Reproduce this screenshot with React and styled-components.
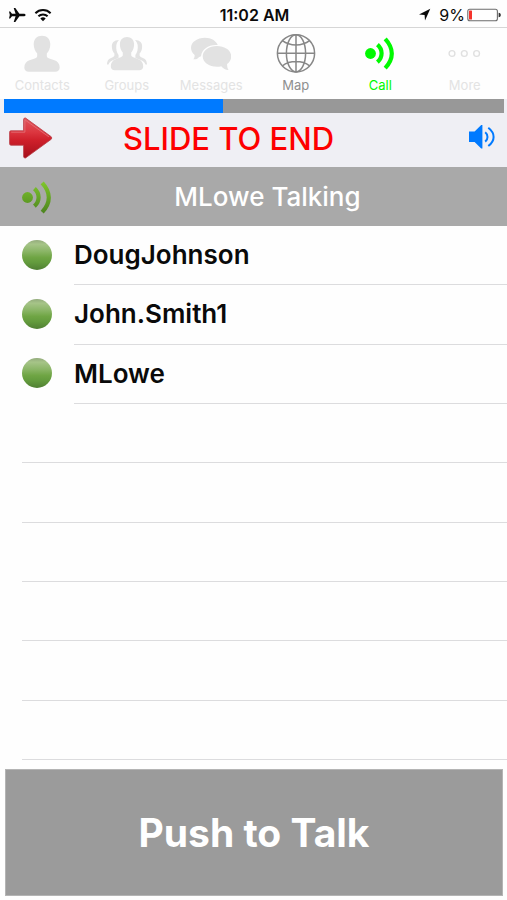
import React, { useState } from 'react'
import styled, { createGlobalStyle } from 'styled-components'

const GlobalStyle = createGlobalStyle`
  * {
    box-sizing: border-box;
  }

  body {
    margin: 0;
    background: #fefefe;
    color: #0a0a0a;
    font-family: Inter, 'Liberation Sans', sans-serif;
  }

  button {
    margin: 0;
    padding: 0;
    border: 0;
    background: none;
    color: inherit;
    font-family: inherit;
    cursor: pointer;
  }

  svg {
    display: block;
  }
`

const Screen = styled.div`
  display: flex;
  flex-direction: column;
  min-height: 100vh;
`

const StatusBar = styled.header`
  display: grid;
  grid-template-columns: 1fr auto 1fr;
  align-items: center;
  height: 28px;
  padding: 2px 6px 0 8px;
  border-bottom: 1px solid #d6d6d6;
  font-size: 16px;
  line-height: 20px;
`

const StatusGroup = styled.div`
  display: flex;
  align-items: center;
  justify-content: ${({ $end }) => ($end ? 'flex-end' : 'flex-start')};
  gap: ${({ $end }) => ($end ? '2px' : '8px')};
`

const Time = styled.time`
  font-weight: 600;
`

const Percent = styled.span`
  margin-left: 6px;
`

const Tabs = styled.nav`
  display: grid;
  grid-template-columns: repeat(6, 1fr);
  height: 71px;
`

const Tab = styled.button`
  display: flex;
  flex-direction: column;
  align-items: center;
  justify-content: flex-start;
  gap: 4px;
  padding-top: 5px;
  color: ${({ $color }) => $color};
  font-size: 13px;
  line-height: 16px;
`

const Track = styled.div`
  height: 14px;
  padding: 0 3px 0 4px;
  background: #efeff4;
`

const TrackInner = styled.div`
  height: 100%;
  background: #989898;
`

const TrackFill = styled.div`
  height: 100%;
  background: #007aff;
`

const EndBar = styled.section`
  display: flex;
  height: 54px;
  padding-bottom: 2px;
  background: #efeff4;
`

const Slider = styled.div`
  position: relative;
  display: flex;
  flex: 1;
  align-items: center;
  justify-content: center;
`

const SliderLabel = styled.label`
  color: #fe0000;
  font-size: 31px;
  font-weight: 500;
  line-height: 40px;
`

const Thumb = styled.div`
  position: absolute;
  top: 4px;
  left: 8px;
`

const Range = styled.input`
  position: absolute;
  inset: 0;
  width: 100%;
  height: 100%;
  margin: 0;
  opacity: 0;
  cursor: pointer;
`

const SpeakerButton = styled.button`
  display: flex;
  align-items: center;
  justify-content: center;
  width: 50px;
  padding-bottom: 4px;
`

const Talking = styled.section`
  display: grid;
  grid-template-columns: 74px 1fr;
  align-items: center;
  height: 59px;
  padding-right: 46px;
  background: #a9a9a9;
  color: #fff;
  font-size: 26px;
  font-weight: 500;
  line-height: 32px;
  text-align: center;
`

const TalkingIcon = styled.div`
  padding-left: 17px;
`

const Members = styled.ul`
  display: grid;
  flex: 1;
  grid-auto-rows: 1fr;
  margin: 0;
  padding: 0;
  list-style: none;
`

const Member = styled.li`
  display: flex;
  min-height: 48px;
  padding-left: 22px;
`

const PresenceCell = styled.div`
  display: flex;
  align-items: center;
  width: 52px;
  padding-bottom: 2px;
`

const Presence = styled.span`
  width: 30px;
  height: 30px;
  border-radius: 50%;
  background: linear-gradient(#93ab7c, #a6c488 14%, #8ab566 38%, #6fa544 58%, #639b3d 75%, #507f33);
`

const Name = styled.div`
  display: flex;
  flex: 1;
  align-items: center;
  border-bottom: 1px solid #dcdcde;
  font-size: 26px;
  font-weight: 600;
  line-height: 32px;
`

const TalkButton = styled.button`
  height: 127px;
  margin: 9px 4px 4px 5px;
  border: 1px solid #b4b4b4;
  background: #9b9b9b;
  color: #fff;
  font-size: 39px;
  font-weight: 700;
  line-height: 48px;
`

const PlaneIcon = () => (
  <svg width="18" height="16" viewBox="0 0 18 16" fill="#0a0a0a" aria-hidden="true">
    <path d="M17.6 8c0 .8-1 1.3-2.2 1.3h-4L7.3 15H5.7l1.9-5.7H4L2.2 11.5H1L1.8 8 1 4.5h1.2L4 6.7h3.6L5.7 1h1.6l4.1 5.7h4c1.2 0 2.2.5 2.2 1.3z" />
  </svg>
)

const WifiIcon = () => (
  <svg width="18" height="14" viewBox="0 0 18 14" fill="none" stroke="#0a0a0a" strokeWidth="2" aria-hidden="true">
    <path d="M1.4 5.2a10.8 10.8 0 0 1 15.2 0M4.4 8.3a6.6 6.6 0 0 1 9.2 0" />
    <path d="M9 13.2 6.3 10.5a3.9 3.9 0 0 1 5.4 0z" fill="#0a0a0a" stroke="none" />
  </svg>
)

const LocationIcon = () => (
  <svg width="13" height="13" viewBox="0 0 13 13" fill="#0a0a0a" aria-hidden="true">
    <path d="M12.3.8 7 12.4l-.4-5.5L1 6.5z" />
  </svg>
)

const BatteryIcon = () => (
  <svg width="34" height="14" viewBox="0 0 34 14" aria-hidden="true">
    <rect x=".8" y="1.2" width="29.6" height="11.6" rx="2" fill="#fff" stroke="#6c6c6c" strokeWidth="1.1" />
    <rect x="2" y="2.4" width="3" height="9.2" rx=".6" fill="#f5332c" />
    <path d="M31.6 4.8c1.6.2 2.2 1 2.2 2.2s-.6 2-2.2 2.2z" fill="#333" />
  </svg>
)

const IconFrame = ({ children }) => (
  <svg width="40" height="40" viewBox="0 0 40 40" fill="none" aria-hidden="true">
    {children}
  </svg>
)

const ContactIcon = () => (
  <IconFrame>
    <path
      fill="#e2e2e2"
      d="M20 2.8c5 0 8.3 3.5 8.3 8.4 0 3.8-1.5 7.2-3.5 9.3v2.6c0 1.3.9 1.9 2.4 2.4l5.3 1.8c3.2 1.2 5.2 3.4 5.2 7.2 0 2.7-1.7 4.2-4.4 4.2H6.7c-2.7 0-4.4-1.5-4.4-4.2 0-3.8 2-6 5.2-7.2l5.3-1.8c1.5-.5 2.4-1.1 2.4-2.4v-2.6c-2-2.1-3.5-5.5-3.5-9.3C11.700 6.3 15 2.800 20 2.800z"
    />
  </IconFrame>
)

const GroupIcon = () => (
  <IconFrame>
    <g fill="#e2e2e2">
      <path d="M12 7c-5 0-7.6 3-7.1 7.3.2 2.7 1 4.7 2.500 6.200v1.7c0 1.2-.9 1.7-2.2 2.2C2 25.5.2 26.8 0 31.5h1.5c1-2.6 3-3.8 5.500-4.700l4.6-1.7v-3c-1.9-2.3-2.7-6.3-2.3-9.6.2-2 1.2-4 2.7-5.5z" />
      <path d="M28 7c5 0 7.6 3 7.1 7.3-.2 2.7-1 4.7-2.5 6.2v1.7c0 1.2.9 1.7 2.2 2.2 3.2 1.1 5 2.4 5.2 7.1h-1.5c-1-2.600-3-3.800-5.500-4.700l-4.600-1.700v-3c1.9-2.3 2.7-6.3 2.3-9.6-.2-2-1.2-4-2.7-5.5z" />
      <path d="M20 4c4.3 0 7.1 3 7.1 7.2 0 3.5-1.2 6.5-2.9 8.4v2.5c0 1.100.8 1.8 2.1 2.2l4.6 1.6c3.3 1.2 5.3 3.4 5.3 7.3 0 2.7-1.5 4-4 4H7.8c-2.5 0-4-1.3-4-4 0-3.9 2-6.1 5.3-7.3l4.600-1.600c1.3-.4 2.1-1.1 2.1-2.2v-2.500c-1.7-1.9-2.9-4.9-2.9-8.400C12.900 7 15.700 4 20 4z" />
    </g>
  </IconFrame>
)

const MessagesIcon = () => (
  <IconFrame>
    <path
      fill="#e2e2e2"
      d="M14 4.7c6.3 0 11.3 3.2 12.7 7.3-8.700-.8-16 4-16.700 11.300-1.3.4-2.3 1.2-3.5 2.1-1 .8-2.6 1-4.3.9 1-1.2 1.5-2.4 1.5-4.4C1.300 20 0 17.400 0 14.700 0 9.100 6.200 4.700 14 4.700z"
    />
    <path
      fill="#e2e2e2"
      d="M26 13c8 0 14.2 4.4 14.2 10.3 0 3.3-1.7 5.9-4.1 7.8-.1 2.6.4 4.5 1.5 6-2.8.1-5.3-1.3-7.4-3.8-1.3.4-2.7.5-4.2.5-8 0-14.3-4.5-14.3-10.5S18 13 26 13z"
    />
  </IconFrame>
)

const GlobeIcon = () => (
  <IconFrame>
    <g stroke="#878787" strokeWidth="1.5">
      <circle cx="20" cy="20.3" r="18.6" />
      <ellipse cx="20" cy="20.3" rx="9.6" ry="18.6" />
      <path d="M20 1.7v37.2M1.4 20.3h37.2M6.4 7.7c3.8 2.9 8.4 4.3 13.6 4.3s9.8-1.4 13.6-4.3M6.4 32.9c3.8-2.9 8.4-4.3 13.6-4.3s9.8 1.4 13.6 4.3" />
    </g>
  </IconFrame>
)

const WavesIcon = ({ color }) => (
  <IconFrame>
    <defs>
      <linearGradient id="leaf" gradientUnits="userSpaceOnUse" x1="0" y1="5" x2="0" y2="36">
        <stop offset="0" stopColor="#7fc62c" />
        <stop offset="1" stopColor="#4d8420" />
      </linearGradient>
    </defs>
    <circle cx="10.5" cy="20.5" r="5.4" fill={color} />
    <path
      stroke={color}
      strokeWidth="4.2"
      d="M17.4 11.6c2.4 2.1 4.2 5 4.2 8.7s-1.8 6.8-4.2 8.9M25.2 5.8c3.3 3.6 6.6 8.4 6.6 14.7s-3.3 11.1-6.6 14.6"
    />
  </IconFrame>
)

const MoreIcon = () => (
  <IconFrame>
    <g stroke="#e0e0e0" strokeWidth="1.4">
      <circle cx="7" cy="20.5" r="2.9" />
      <circle cx="19.3" cy="20.5" r="2.9" />
      <circle cx="31.6" cy="20.5" r="2.9" />
    </g>
  </IconFrame>
)

const ArrowIcon = () => (
  <svg width="46" height="42" viewBox="0 0 46 42" aria-hidden="true">
    <defs>
      <linearGradient id="arrow" x1="0" y1="0" x2="0" y2="1">
        <stop offset="0" stopColor="#e0565e" />
        <stop offset=".35" stopColor="#dc3740" />
        <stop offset=".55" stopColor="#cf202b" />
        <stop offset="1" stopColor="#a50f1b" />
      </linearGradient>
    </defs>
    <path
      d="M3 13.8q-1.4 0-1.4 1.4v11.6q0 1.4 1.4 1.4h12.6v11.5q.3 1.6 1.9 1.3L43.2 22.3q1.2-1.3 0-2.6L17.5 1q-1.6-.3-1.9 1.3v11.5z"
      fill="url(#arrow)"
      stroke="#b83a42"
      strokeWidth=".8"
    />
    <path d="M3.2 15.2h13.7V2.8l24 17" fill="none" stroke="#e5737a" strokeWidth=".8" />
  </svg>
)

const SpeakerIcon = () => (
  <svg width="28" height="26" viewBox="0 0 28 26" fill="none" aria-hidden="true">
    <path d="M1 7.5h5.6L13.2 1h1.2v23.600h-1.2L6.6 18H1z" fill="#007aff" />
    <path
      d="M17.2 8.2c1.5 1.2 2.3 2.8 2.3 4.7s-.8 3.5-2.3 4.7M20.3 3.8c2.9 2.3 5.3 5.3 5.3 9.1s-2.4 6.9-5.3 9.1"
      stroke="#007aff"
      strokeWidth="2"
    />
  </svg>
)

const tabs = [
  { label: 'Contacts', color: '#e3e3e3', icon: <ContactIcon /> },
  { label: 'Groups', color: '#e3e3e3', icon: <GroupIcon /> },
  { label: 'Messages', color: '#e3e3e3', icon: <MessagesIcon /> },
  { label: 'Map', color: '#8f8f8f', icon: <GlobeIcon /> },
  { label: 'Call', color: '#00f900', icon: <WavesIcon color="#00f900" /> },
  { label: 'More', color: '#e3e3e3', icon: <MoreIcon /> }
]

const members = ['DougJohnson', 'John.Smith1', 'MLowe']
const emptyRows = 6

const SlideToEnd = () => {
  const [value, setValue] = useState(0)

  return (
    <Slider>
      <SliderLabel htmlFor="end-call">SLIDE TO END</SliderLabel>
      <Thumb style={{ transform: `translateX(${value * 4}px)` }}>
        <ArrowIcon />
      </Thumb>
      <Range
        id="end-call"
        type="range"
        min="0"
        max="100"
        value={value}
        onChange={e => setValue(Number(e.target.value))}
      />
    </Slider>
  )
}

const App = () => {
  const progress = 43.7

  return (
    <>
      <GlobalStyle />
      <Screen>
        <StatusBar>
          <StatusGroup>
            <PlaneIcon />
            <WifiIcon />
          </StatusGroup>
          <Time>11:02 AM</Time>
          <StatusGroup $end>
            <LocationIcon />
            <Percent>9%</Percent>
            <BatteryIcon />
          </StatusGroup>
        </StatusBar>
        <Tabs>
          {tabs.map(({ label, color, icon }) => (
            <Tab key={label} type="button" $color={color}>
              {icon}
              {label}
            </Tab>
          ))}
        </Tabs>
        <Track>
          <TrackInner>
            <TrackFill style={{ width: `${progress}%` }} />
          </TrackInner>
        </Track>
        <EndBar>
          <SlideToEnd />
          <SpeakerButton type="button" aria-label="Speaker">
            <SpeakerIcon />
          </SpeakerButton>
        </EndBar>
        <Talking>
          <TalkingIcon>
            <WavesIcon color="url(#leaf)" />
          </TalkingIcon>
          <span>MLowe Talking</span>
        </Talking>
        <Members>
          {members.map(name => (
            <Member key={name}>
              <PresenceCell>
                <Presence />
              </PresenceCell>
              <Name>{name}</Name>
            </Member>
          ))}
          {Array.from({ length: emptyRows }, (_, i) => (
            <Member key={i}>
              <Name />
            </Member>
          ))}
        </Members>
        <TalkButton type="button">Push to Talk</TalkButton>
      </Screen>
    </>
  )
}

export default App
